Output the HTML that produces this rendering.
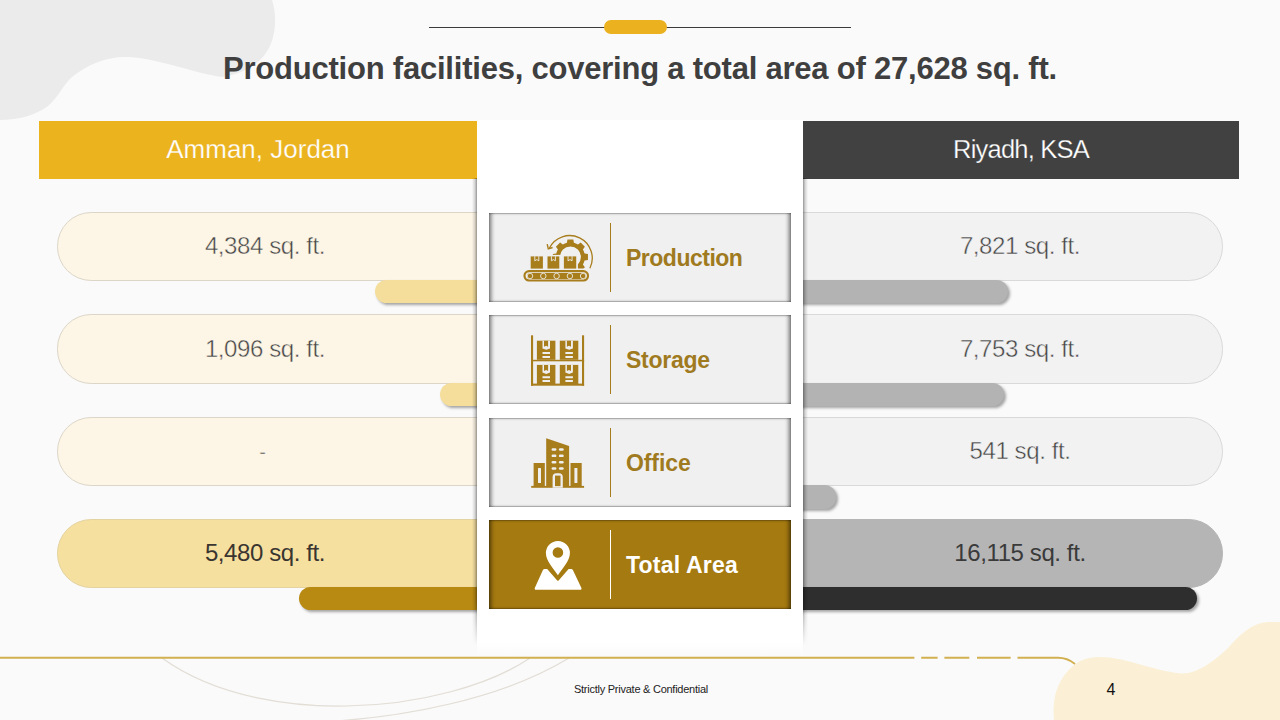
<!DOCTYPE html>
<html><head><meta charset="utf-8">
<style>
*{margin:0;padding:0;box-sizing:border-box}
html,body{width:1280px;height:720px;overflow:hidden;background:#fafafa;font-family:"Liberation Sans",sans-serif}
.a{position:absolute}
.m{white-space:nowrap}
#title{left:0;top:50.6px;width:1280px;text-align:center;font-weight:bold;font-size:31px;letter-spacing:-0.22px;color:#3f3f3f;line-height:36px}
.hdr{top:121px;height:57.5px;color:#fff;font-size:26px;line-height:57px;text-align:center}
.pill{height:68.5px;border-radius:34.25px;border:1px solid #dcd6c8}
.lp{left:57px;width:480px;background:#fdf6e6}
.rp{left:743px;width:480px;background:#f2f2f2;border-color:#d9d9d9}
.val{font-size:24px;letter-spacing:-0.4px;-webkit-text-stroke:0.45px #fdf6e6;color:#444;text-align:center;line-height:68px}
.bar{height:23px;box-shadow:2px 2px 3px rgba(0,0,0,.35)}
.lb{border-radius:11.5px 0 0 11.5px;background:#f5de9c}
.rb{border-radius:0 11.5px 11.5px 0;background:#b3b3b3}
#col{left:477px;top:120px;width:326px;height:537px;background:linear-gradient(#fff 0,#fff 522px,rgba(255,255,255,0) 537px)}
.sh{top:178px;width:5px;height:468px;-webkit-mask-image:linear-gradient(#000 0,#000 420px,transparent 468px)}
.box{left:489px;width:302px;height:88.5px;background:#f0f0f0;box-shadow:inset 4px 0 4px -2px rgba(0,0,0,.55),inset -4px 0 4px -2px rgba(0,0,0,.55),inset 0 1px 1px rgba(0,0,0,.18),inset 0 -1px 1px rgba(0,0,0,.18)}
.div{left:610px;width:1.4px;background:#a67c1a}
.lbl{left:626px;font-weight:bold;font-size:23px;letter-spacing:-0.5px;color:#9f7a1e;line-height:30px}
</style></head><body>
<!-- background -->
<svg class="a" style="left:0;top:0" width="1280" height="720">
  <path d="M0,0 L272,0 C276,12 277,30 270,46 C263,61 248,73 222,77 C198,74 160,59 129,57 C108,56 88,64 72,77 C62,86 58,98 48,106 C36,115 18,120 0,120 Z" fill="#ebebeb"/>
  <path d="M162,658 C220,700 300,707 346,706 C420,705 490,685 530,658" fill="none" stroke="#e2ddd5" stroke-width="1.2"/>
  <path d="M569,658 C500,700 400,718 320,722" fill="none" stroke="#e2ddd5" stroke-width="1.2"/>
  <path d="M1054,720 C1052,700 1056,680 1074,665 C1082,659 1090,657 1100,657 C1125,657 1150,670 1181,673.5 C1198,674 1215,660 1228,648 C1240,634 1252,623 1268,622 L1280,622 L1280,720 Z" fill="#fbf0d5"/>
</svg>
<!-- top ornament -->
<div class="a" style="left:429px;top:27px;width:422px;height:1.2px;background:#3a3a3a"></div>
<div class="a" style="left:604px;top:20px;width:63px;height:14px;border-radius:7px;background:#ebb11f"></div>
<div id="title" class="a"><span class="m">Production facilities, covering a total area of 27,628 sq. ft.</span></div>
<!-- headers -->
<div class="a hdr" style="left:39px;width:438px;background:#ebb31e;-webkit-text-stroke:0.25px #ebb31e"><span class="m">Amman, Jordan</span></div>
<div class="a hdr" style="left:803px;width:436px;background:#414141;-webkit-text-stroke:0.25px #414141"><span class="m" style="font-size:25.5px;letter-spacing:-0.8px">Riyadh, KSA</span></div>

<!-- left pills -->
<div class="a pill lp" style="top:212px"></div>
<div class="a bar lb" style="left:375px;top:280px;width:110px"></div>
<div class="a pill lp" style="top:314px;height:69.5px"></div>
<div class="a bar lb" style="left:440px;top:383px;width:50px"></div>
<div class="a pill lp" style="top:417px;height:69px"></div>
<div class="a pill lp" style="top:519px;background:#f6e0a0;border-color:#e3d3a0"></div>
<div class="a bar lb" style="left:298.5px;top:587px;width:190px;background:#b88a12"></div>

<!-- right pills -->
<div class="a pill rp" style="top:212px"></div>
<div class="a bar rb" style="left:795px;top:280px;width:213px"></div>
<div class="a pill rp" style="top:314px;height:69.5px"></div>
<div class="a bar rb" style="left:795px;top:383px;width:209px"></div>
<div class="a pill rp" style="top:417px;height:69px"></div>
<div class="a bar rb" style="left:795px;top:485px;width:40.5px;height:24px"></div>
<div class="a pill rp" style="top:519px;background:#b5b5b5;border-color:#b5b5b5"></div>
<div class="a bar rb" style="left:795px;top:587px;width:402px;background:#2e2e2e"></div>

<!-- values -->
<div class="a val" style="left:65px;width:400px;top:212px"><span class="m">4,384 sq. ft.</span></div>
<div class="a val" style="left:65px;width:400px;top:314.5px"><span class="m">1,096 sq. ft.</span></div>
<div class="a val" style="left:62.5px;width:400px;top:417px"><span class="m" style="font-size:20px">-</span></div>
<div class="a val" style="left:65px;width:400px;top:519px;color:#3a3530;-webkit-text-stroke:0"><span class="m">5,480 sq. ft.</span></div>
<div class="a val" style="left:820px;width:400px;top:212px;-webkit-text-stroke-color:#f2f2f2"><span class="m">7,821 sq. ft.</span></div>
<div class="a val" style="left:820px;width:400px;top:314.5px;-webkit-text-stroke-color:#f2f2f2"><span class="m">7,753 sq. ft.</span></div>
<div class="a val" style="left:820px;width:400px;top:417px;-webkit-text-stroke-color:#f2f2f2"><span class="m">541 sq. ft.</span></div>
<div class="a val" style="left:820px;width:400px;top:519px;color:#3a3a3a;-webkit-text-stroke:0"><span class="m">16,115 sq. ft.</span></div>

<!-- white column -->
<div id="col" class="a"></div>
<div class="a sh" style="left:472px;background:linear-gradient(to left,rgba(0,0,0,.4),rgba(0,0,0,.14) 45%,rgba(0,0,0,0))"></div>
<div class="a sh" style="left:803px;background:linear-gradient(to right,rgba(0,0,0,.4),rgba(0,0,0,.14) 45%,rgba(0,0,0,0))"></div>

<!-- boxes -->
<div class="a box" style="top:213px"></div>
<div class="a box" style="top:315px"></div>
<div class="a box" style="top:418px"></div>
<div class="a box" style="top:520px;background:#a57a10"></div>
<div class="a div" style="top:223px;height:69px"></div>
<div class="a div" style="top:325px;height:69px"></div>
<div class="a div" style="top:428px;height:69px"></div>
<div class="a div" style="top:530px;height:69px;background:#fff"></div>
<div class="a lbl" style="top:242.6px"><span class="m">Production</span></div>
<div class="a lbl" style="top:344.7px;letter-spacing:-0.27px"><span class="m">Storage</span></div>
<div class="a lbl" style="top:447.6px;letter-spacing:-0.1px"><span class="m">Office</span></div>
<div class="a lbl" style="top:550px;color:#fff;letter-spacing:0.2px"><span class="m">Total Area</span></div>

<svg class="a" style="left:0;top:0" width="1280" height="720">
 <defs><clipPath id="gc"><path d="M540,230 H600 V268.6 H577.7 V254.9 H540 Z"/></clipPath></defs>
 <g fill="#a87d1c">
  <!-- production -->
  <path clip-path="url(#gc)" fill-rule="evenodd" d="M575.99,243.51 L573.93,242.83 L573.34,239.44 L567.46,239.44 L566.87,242.83 L564.81,243.51 L562.88,244.49 L560.06,242.51 L555.91,246.66 L557.89,249.48 L556.91,251.41 L556.23,253.47 L552.84,254.06 L552.84,259.94 L556.23,260.53 L556.91,262.59 L557.89,264.52 L555.91,267.34 L560.06,271.49 L562.88,269.51 L564.81,270.49 L566.87,271.17 L567.46,274.56 L573.34,274.56 L573.93,271.17 L575.99,270.49 L577.92,269.51 L580.74,271.49 L584.89,267.34 L582.91,264.52 L583.89,262.59 L584.57,260.53 L587.96,259.94 L587.96,254.06 L584.57,253.47 L583.89,251.41 L582.91,249.48 L584.89,246.66 L580.74,242.51 L577.92,244.49 Z M580.9,257 A10.5,10.5 0 1 0 559.9,257 A10.5,10.5 0 1 0 580.9,257 Z"/>
  <g stroke="#efefef" stroke-width="3">
   <rect x="530.7" y="256.4" width="12.2" height="12.2"/>
   <rect x="547.5" y="256.4" width="11.8" height="12.2"/>
   <rect x="563.9" y="256.4" width="12.3" height="12.2"/>
  </g>
  <rect x="530.7" y="256.4" width="12.2" height="12.2"/>
  <rect x="547.5" y="256.4" width="11.8" height="12.2"/>
  <rect x="563.9" y="256.4" width="12.3" height="12.2"/>
  <g fill="none" stroke="#efefef" stroke-width="0.9">
   <path d="M534.8,256.2 V260.8 L536.8,259.6 L538.8,260.8 V256.2"/>
   <path d="M551.4,256.2 V260.8 L553.4,259.6 L555.4,260.8 V256.2"/>
   <path d="M568.05,256.2 V260.8 L570.05,259.6 L572.05,260.8 V256.2"/>
  </g>
  <path d="M589.9,268.25 A22.5,22.5 0 1 0 549.3,248.2" fill="none" stroke="#a87d1c" stroke-width="1.3"/>
  <path d="M547.2,244.2 L548.3,248.8 L552.6,247.5" fill="none" stroke="#a87d1c" stroke-width="1.4"/>
  <rect x="524.5" y="271.2" width="63.5" height="9.3" rx="4.65" fill="none" stroke="#a87d1c" stroke-width="2.2"/>
  <rect x="527" y="273.1" width="59" height="5.8" rx="2.9"/>
  <g fill="#a87d1c" stroke="#efefef" stroke-width="0.85">
   <circle cx="530" cy="276" r="2.75"/><circle cx="543.3" cy="276" r="2.75"/><circle cx="556.6" cy="276" r="2.75"/><circle cx="569.9" cy="276" r="2.75"/><circle cx="583.1" cy="276" r="2.75"/>
  </g>
  <!-- storage -->
  <rect x="531" y="335.3" width="2.1" height="50.4"/>
  <rect x="582" y="335.3" width="2.1" height="50.4"/>
  <rect x="531" y="359.8" width="53.1" height="1.5"/>
  <rect x="531" y="383.6" width="53.1" height="2.1"/>
  <g id="sb">
   <rect x="536.9" y="340.7" width="18.5" height="19.1"/>
   <path fill="#efefef" d="M542.5,340.7 H550 V348.4 L546.25,349.7 L542.5,348.4 Z M542.5,352 H550 V354 H542.5 Z M542.5,355.9 H550 V357.9 H542.5 Z"/>
   <path d="M544,340.7 H548.1 V346.75 L546.05,345.8 L544,346.75 Z"/>
  </g>
  <use href="#sb" x="22.9" y="0"/>
  <use href="#sb" x="0" y="24.2"/>
  <use href="#sb" x="22.9" y="24.2"/>
  <!-- office -->
  <rect x="531.2" y="485.9" width="52.9" height="1.9"/>
  <rect x="533.6" y="463" width="11.2" height="23.5"/>
  <rect x="570.5" y="463" width="11.2" height="23.5"/>
  <path d="M546.2,438.3 L569.1,446 V486.5 H546.2 Z"/>
  <g fill="#efefef">
   <rect x="551.6" y="448.2" width="4.8" height="2.5" rx="1.2"/><rect x="558.9" y="448.2" width="4.8" height="2.5" rx="1.2"/>
   <rect x="551.6" y="454.6" width="4.8" height="2.5" rx="1.2"/><rect x="558.9" y="454.6" width="4.8" height="2.5" rx="1.2"/>
   <rect x="551.6" y="460.9" width="4.8" height="2.5" rx="1.2"/><rect x="558.9" y="460.9" width="4.8" height="2.5" rx="1.2"/>
   <rect x="551.6" y="467.2" width="4.8" height="2.5" rx="1.2"/><rect x="558.9" y="467.2" width="4.8" height="2.5" rx="1.2"/>
   <path d="M552.6,487.8 V477 A3.8,3.8 0 0 1 556.4,473.2 H559 A3.8,3.8 0 0 1 562.8,477 V487.8 Z"/>
   <rect x="538" y="467.9" width="3" height="15.1" rx="0.5"/>
   <rect x="574.4" y="467.9" width="3" height="15.1" rx="0.5"/>
  </g>
  <rect x="555" y="475.6" width="5.5" height="10.5"/>
 </g>
 <!-- location -->
 <g fill="#fff">
  <path fill-rule="evenodd" d="M557.9,575.2 C553,568 545.9,561 545.9,553.1 A12,12 0 0 1 569.9,553.1 C569.9,561 562.8,568 557.9,575.2 Z M563.2,552.5 A5.3,5.3 0 1 0 552.6,552.5 A5.3,5.3 0 1 0 563.2,552.5 Z"/>
  <path d="M536.2,589.8 H580 Q582.2,589.8 581.3,587.8 L573,570.2 Q572.4,568.9 571,568.9 H568.6 L558.6,580.4 Q557.9,581.2 557.2,580.4 L547.2,568.9 H544.8 Q543.4,568.9 542.8,570.2 L534.9,587.8 Q534,589.8 536.2,589.8 Z"/>
 </g>
</svg>

<!-- footer -->
<svg class="a" style="left:0;top:0" width="1280" height="720">
  <path d="M0,657.8 L914.4,657.8 M921.2,657.8 L937.6,657.8 M944.4,657.8 L969.3,657.8 M977,657.8 L1010.6,657.8 M1017.5,657.8 L1058,657.8 C1064,657.8 1070,660 1075,664" fill="none" stroke="#d2b050" stroke-width="1.9"/>
</svg>
<div class="a" style="left:560px;top:683px;width:162px;text-align:center;font-size:11px;letter-spacing:-0.25px;color:#222;line-height:12px"><span class="m">Strictly Private &amp; Confidential</span></div>
<div class="a" style="left:1100px;top:682px;width:22px;text-align:center;font-size:16px;color:#111;line-height:16px"><span class="m">4</span></div>
</body></html>
